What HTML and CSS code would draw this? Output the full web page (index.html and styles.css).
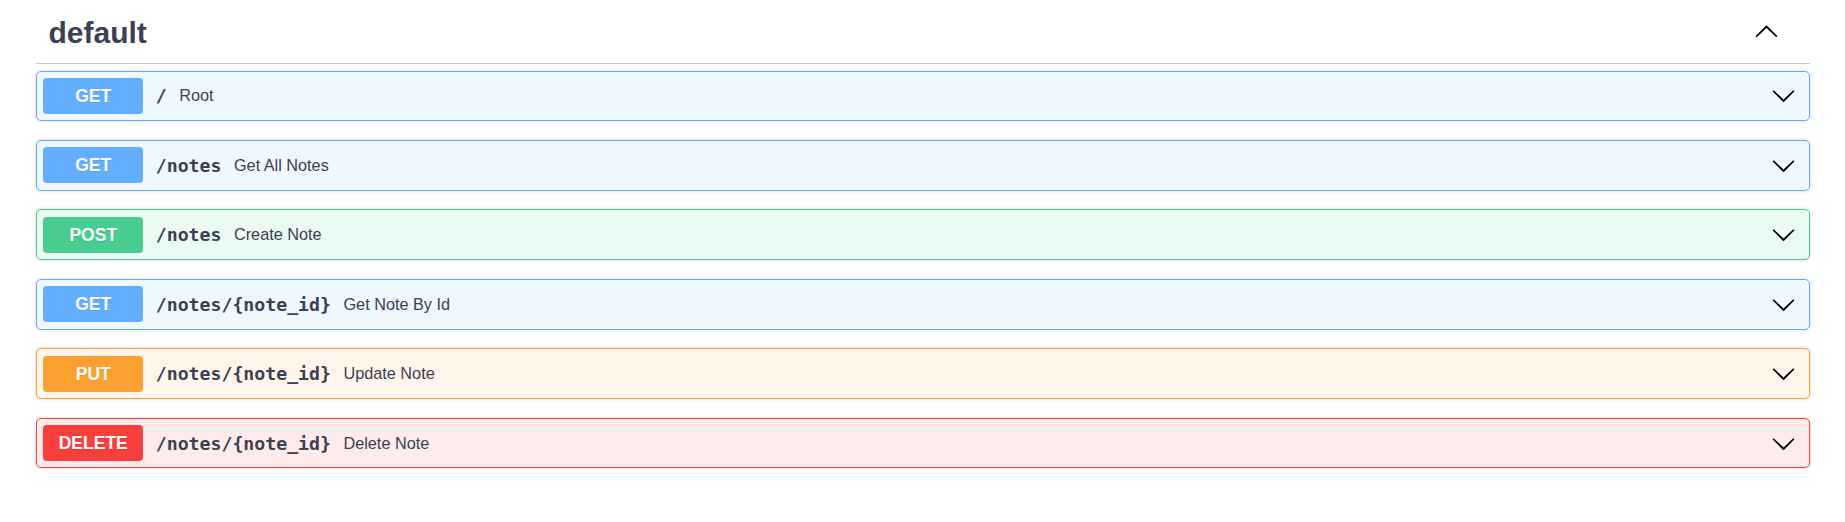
FILE: index.html
```html
<!DOCTYPE html>
<html lang="en">
<head>
<meta charset="utf-8">
<title>default</title>
<link rel="stylesheet" href="styles.css">
</head>
<body>
<svg class="defs" width="0" height="0" aria-hidden="true">
  <defs>
    <path id="chev-down" d="M17.418 6.109c.272-.268.709-.268.979 0s.271.701 0 .969l-7.908 7.83c-.27.268-.707.268-.979 0l-7.908-7.83c-.27-.268-.27-.701 0-.969.271-.268.709-.268.979 0L10 13.25l7.418-7.141z"/>
  </defs>
</svg>
<div class="wrapper">
  <section class="tag-section">
    <h3 class="opblock-tag">
      <span class="tag-name">default</span>
      <svg class="tag-arrow" viewBox="0 0 20 20" width="25" height="25"><use href="#chev-down" transform="rotate(180 10 10.6)"/></svg>
    </h3>

    <div class="opblock get">
      <span class="method">GET</span>
      <span class="path">/</span>
      <span class="desc">Root</span>
      <svg class="arrow" viewBox="0 0 20 20" width="25" height="25"><use href="#chev-down"/></svg>
    </div>

    <div class="opblock get">
      <span class="method">GET</span>
      <span class="path">/notes</span>
      <span class="desc">Get All Notes</span>
      <svg class="arrow" viewBox="0 0 20 20" width="25" height="25"><use href="#chev-down"/></svg>
    </div>

    <div class="opblock post">
      <span class="method">POST</span>
      <span class="path">/notes</span>
      <span class="desc">Create Note</span>
      <svg class="arrow" viewBox="0 0 20 20" width="25" height="25"><use href="#chev-down"/></svg>
    </div>

    <div class="opblock get">
      <span class="method">GET</span>
      <span class="path">/notes/{note_id}</span>
      <span class="desc">Get Note By Id</span>
      <svg class="arrow" viewBox="0 0 20 20" width="25" height="25"><use href="#chev-down"/></svg>
    </div>

    <div class="opblock put">
      <span class="method">PUT</span>
      <span class="path">/notes/{note_id}</span>
      <span class="desc">Update Note</span>
      <svg class="arrow" viewBox="0 0 20 20" width="25" height="25"><use href="#chev-down"/></svg>
    </div>

    <div class="opblock delete">
      <span class="method">DELETE</span>
      <span class="path">/notes/{note_id}</span>
      <span class="desc">Delete Note</span>
      <svg class="arrow" viewBox="0 0 20 20" width="25" height="25"><use href="#chev-down"/></svg>
    </div>
  </section>
</div>
</body>
</html>
```

FILE: styles.css
```css
html, body {
  margin: 0;
  padding: 0;
  background: #ffffff;
}

body {
  font-family: "Liberation Sans", Arial, sans-serif;
  color: #3b4151;
}

.defs {
  position: absolute;
  width: 0;
  height: 0;
  overflow: hidden;
}

.wrapper {
  padding: 0 35px 0 36px;
}

.opblock-tag {
  display: flex;
  align-items: center;
  box-sizing: border-box;
  height: 64px;
  margin: 0 0 6.5px;
  padding: 2.5px 31px 0 12.5px;
  border-bottom: 1px solid rgba(59, 65, 81, 0.3);
  font-size: 30px;
  font-weight: 700;
  color: #3b4151;
}

.tag-name {
  flex: 1 1 auto;
}

.tag-arrow {
  flex: none;
  margin-bottom: 4px;
  fill: #000;
}

.opblock {
  display: flex;
  align-items: center;
  margin: 0 0 18.75px;
  padding: 6.25px;
  border: 1px solid;
  border-radius: 5px;
  box-shadow: 0 0 3.75px rgba(0, 0, 0, 0.19);
}

.method {
  flex: none;
  width: 100px;
  height: 36.2px;
  line-height: 36.2px;
  text-align: center;
  border-radius: 3.75px;
  color: #fff;
  font-size: 17.5px;
  font-weight: 700;
  text-shadow: 0 1px 0 rgba(0, 0, 0, 0.1);
}

.path {
  flex: none;
  padding: 0 12.5px;
  font-family: "DejaVu Sans Mono", "Liberation Mono", monospace;
  font-size: 18.2px;
  font-weight: 700;
  color: #3b4151;
}

.desc {
  flex: 1 1 auto;
  font-size: 16.25px;
  color: #3b4151;
}

.arrow {
  flex: none;
  margin: 0 6.75px 0 12.5px;
  fill: #000;
}

.opblock.get {
  background: rgba(97, 175, 254, 0.1);
  border-color: #61affe;
}
.opblock.get .method { background: #61affe; }

.opblock.post {
  background: rgba(73, 204, 144, 0.1);
  border-color: #49cc90;
}
.opblock.post .method { background: #49cc90; }

.opblock.put {
  background: rgba(252, 161, 48, 0.1);
  border-color: #fca130;
}
.opblock.put .method { background: #fca130; }

.opblock.delete {
  background: rgba(249, 62, 62, 0.1);
  border-color: #f93e3e;
}
.opblock.delete .method { background: #f93e3e; }
```
